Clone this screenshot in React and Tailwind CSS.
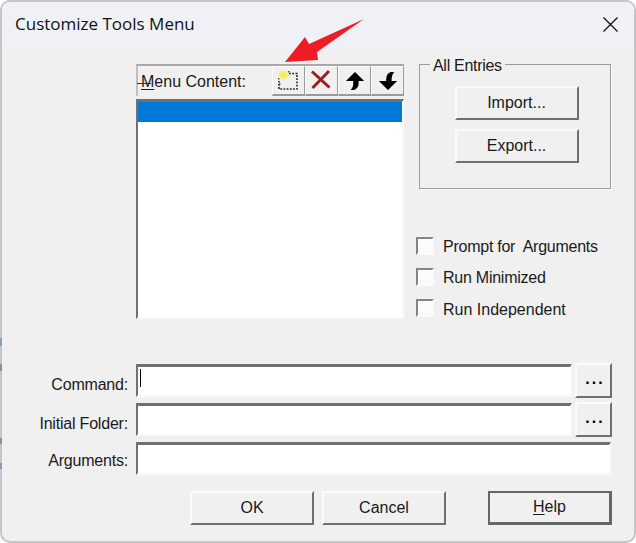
const ui = { fontFamily: '"Liberation Sans", Arial, sans-serif' }

const RAISED = 'border-2 border-t-[#fbfbfb] border-l-[#fbfbfb] border-r-[#6f6f6f] border-b-[#6f6f6f] bg-[#f0f0f0]'
const SUNKEN = 'border-2 border-t-[3px] border-t-[#707070] border-l-[#707070] border-r-[#fafafa] border-b-[#fafafa] bg-white'
const CHECK = 'border-2 border-t-[#858585] border-l-[#858585] border-r-[#fafafa] border-b-[#fafafa] bg-[#fbfbfb]'

function Btn({ children, className = '' }) {
  return (
    <div className={`flex h-[34px] w-[124px] items-center justify-center pb-px text-[16px] text-[#1a1a1a] ${RAISED} ${className}`}>
      {children}
    </div>
  )
}

function ToolBtn({ children }) {
  return (
    <div className="flex h-[30px] w-[33px] items-center justify-center border border-t-[#fbfbfb] border-l-[#fbfbfb] border-r-[#9a9a9a] border-b-2 border-b-[#9a9a9a]">
      {children}
    </div>
  )
}

function NewIcon() {
  return (
    <svg width="24" height="24" viewBox="0 0 24 24">
      <path d="M12 4.5h8v15.5H2V12" fill="none" stroke="#2a2a2a" strokeWidth="1.6" strokeDasharray="1.8 1.4" />
      <path d="M6.5 1v10M1.5 6h10" stroke="#f6f02a" strokeWidth="1.3" />
      <path d="M3 2.5l7 7M10 2.5l-7 7" stroke="#f6f02a" strokeWidth="1.3" />
      <path d="M1 9h1.5v1.5H1zM11 2h1.5v1.5H11zM2 14h1.5v1.5H2z" fill="#55553a" />
    </svg>
  )
}

function DeleteIcon() {
  return (
    <svg width="24" height="24" viewBox="0 0 24 24">
      <path d="M2 2.5l17.5 16M19 2L2.5 19" stroke="#a01c22" strokeWidth="3" fill="none" />
    </svg>
  )
}

function UpIcon() {
  return (
    <svg width="20" height="20" viewBox="0 0 22 22">
      <path d="M11 1l10 10h-6v3c0 3-2 6-5 7H6c2-2 3-4 3-7v-3H1z" fill="#000" />
    </svg>
  )
}

function DownIcon() {
  return (
    <svg width="20" height="20" viewBox="0 0 22 22">
      <path d="M11 21L21 11h-6V9c0-3 1-6 3-8h-4c-3 1-5 4-5 8v2H1z" fill="#000" />
    </svg>
  )
}

function Check({ label, className = '' }) {
  return (
    <div className="flex h-[18px] items-center">
      <div className={`h-[18px] w-[18px] ${CHECK}`} />
      <span className={`relative ml-[9px] whitespace-pre pt-[2px] text-[16px] text-[#1a1a1a] ${className}`}>{label}</span>
    </div>
  )
}

function Field({ label, width, browse, caret, labelOffset }) {
  return (
    <div className="flex h-[33px] items-center">
      <span className={`w-[126px] text-right text-[16px] tracking-[-0.2px] text-[#1a1a1a] ${labelOffset}`}>{label}</span>
      <div className={`ml-2 h-[33px] ${SUNKEN} ${width}`}>
        {caret && <div className="ml-[2px] mt-[2px] h-[18px] w-px bg-black" />}
      </div>
      {browse && (
        <div className={`ml-[3px] flex h-[35px] w-[37px] items-center justify-center pb-[3px] pl-[3px] text-[16px] font-bold tracking-[2px] text-black ${RAISED}`}>
          ...
        </div>
      )}
    </div>
  )
}

export default function App() {
  return (
    <div style={ui} className="relative h-[543px] w-[636px] overflow-hidden bg-white">
      <div className="h-full rounded-[10px] border-2 border-[#c4c5c8] bg-[#f0f0f0]">
        {/* Title bar */}
        <div className="flex h-[46px] items-center justify-between rounded-t-[8px] bg-[#f0f1f7] pb-[2px] pl-[13px] pr-[16px]">
          <span className="text-[17px] text-[#111]" style={{ fontFamily: '"Open Sans", sans-serif' }}>Customize Tools Menu</span>
          <svg width="15" height="15" viewBox="0 0 15 15">
            <path d="M0.5 0.5l14 14M14.5 0.5l-14 14" stroke="#111" strokeWidth="1.3" fill="none" />
          </svg>
        </div>

        <div className="ml-[134px] mt-4 flex">
          {/* Menu content */}
          <div className="w-[268px]">
            <div className="flex h-[32px] items-center border-l-2 border-t-2 border-l-[#c0c0c0] border-t-[#a8a8a8]">
              <span className="relative ml-[3px] flex-1 pt-[2px] text-[16px] text-[#1a1a1a]">
                <span className="underline underline-offset-2">M</span>enu Content:
                <span className="absolute left-[-4px] top-[15px] h-px w-[14px] bg-[#333]" />
              </span>
              <ToolBtn><NewIcon /></ToolBtn>
              <ToolBtn><DeleteIcon /></ToolBtn>
              <ToolBtn><UpIcon /></ToolBtn>
              <ToolBtn><DownIcon /></ToolBtn>
            </div>
            <div className={`mt-[3px] h-[220px] ${SUNKEN}`}>
              <div className="h-5 bg-[#0078d7]" />
            </div>
          </div>

          {/* Right column */}
          <div className="ml-[12px]">
            <div className="relative ml-[3px] flex h-[125px] w-[192px] flex-col items-center gap-[9px] border border-[#9c9c9c] pt-[21px] pl-[3px] shadow-[1px_1px_0_#fbfbfb]">
              <span className="absolute left-[10px] top-[-11px] bg-[#f0f0f0] px-[3px] text-[16px] tracking-[-0.3px] text-[#1a1a1a]">All Entries</span>
              <Btn>Import...</Btn>
              <Btn>Export...</Btn>
            </div>
            <div className="mt-[48px] flex flex-col gap-[13px]">
              <Check label="Prompt for  Arguments" className="tracking-[-0.25px]" />
              <Check label="Run Minimized" className="tracking-[-0.25px]" />
              <Check label="Run Independent" className="top-px" />
            </div>
          </div>
        </div>

        {/* Fields */}
        <div className="mt-[45px] flex flex-col gap-[6px]">
          <Field label="Command:" width="w-[436px]" labelOffset="pt-[9px]" browse caret />
          <Field label="Initial Folder:" width="w-[436px]" labelOffset="pt-[8px]" browse />
          <Field label="Arguments:" width="w-[475px]" labelOffset="pt-[4px]" />
        </div>

        {/* Footer buttons */}
        <div className="ml-[188px] mt-[16px] flex">
          <Btn>OK</Btn>
          <Btn className="ml-[8px]">Cancel</Btn>
          <div className="ml-[42px] flex h-[34px] w-[124px] items-center justify-center border-2 border-b-[3px] border-r-[3px] border-[#666] pb-px text-[16px] text-[#1a1a1a]">
            <span><span className="underline underline-offset-2">H</span>elp</span>
          </div>
        </div>
      </div>

      {/* Bits of the desktop showing at the window edge */}
      <div className="absolute left-0 top-[338px] h-[8px] w-[2px] bg-[#6d8fb5] opacity-70" />
      <div className="absolute left-0 top-[364px] h-[7px] w-[2px] bg-[#8f7660] opacity-70" />
      <div className="absolute left-0 top-[438px] h-[6px] w-[2px] bg-[#8f7660] opacity-70" />
      <div className="absolute left-0 top-[463px] h-[6px] w-[2px] bg-[#6d8fb5] opacity-70" />

      {/* Red annotation arrow */}
      <svg className="absolute left-0 top-0" width="636" height="100" viewBox="0 0 636 100">
        <path d="M285 62L305 37L309 44L364 19L317 52L318 60Z" fill="#ee1c25" />
      </svg>
    </div>
  )
}
